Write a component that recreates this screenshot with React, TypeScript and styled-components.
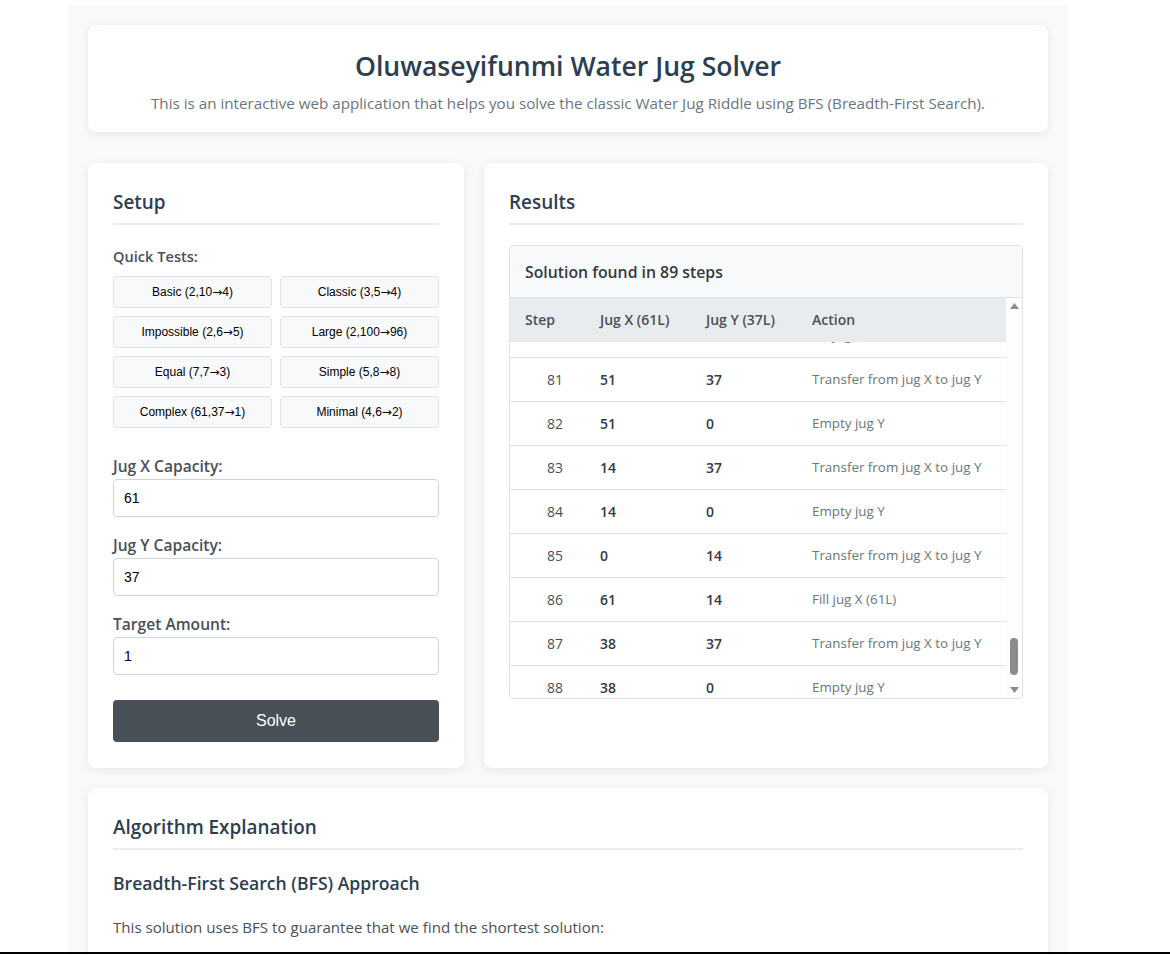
import React, { useLayoutEffect, useRef, useState } from "react";
import styled, { createGlobalStyle } from "styled-components";

const UI_FONT = `"Segoe UI", "Open Sans", "Noto Sans", sans-serif`;
const ARIAL = `"Liberation Sans", Arial, sans-serif`;

const GlobalStyle = createGlobalStyle`
  html, body {
    margin: 0;
    padding: 0;
    background: #ffffff;
    height: 955px;
    overflow: hidden;
  }
  body {
    font-family: ${UI_FONT};
    color: #333;
  }
  * { box-sizing: border-box; }
`;

const Page = styled.main`
  width: 1000px;
  margin: 5px 0 0 68px;
  padding: 20px;
  background: #f8f9fa;
  display: flex;
  flex-direction: column;
`;

const Card = styled.section`
  background: #ffffff;
  border-radius: 8px;
  box-shadow: 0 2px 10px rgba(0, 0, 0, 0.08);
  padding: 25px;
`;

const HeaderCard = styled(Card)`
  text-align: center;
  padding: 25px 25px 20px;
  margin-bottom: 31px;
`;

const Title = styled.h1`
  margin: 0 0 12px;
  font-size: 26.6px;
  line-height: 32px;
  font-weight: 600;
  color: #2c3e50;
`;

const Subtitle = styled.p`
  margin: 0;
  font-size: 15.2px;
  line-height: 18px;
  color: #6c757d;
`;

const Columns = styled.div`
  display: grid;
  grid-template-columns: 2fr 3fr;
  gap: 20px;
  margin-bottom: 20px;
`;

const SectionTitle = styled.h2`
  margin: 0 0 20px;
  padding: 3px 0 9px;
  border-bottom: 2px solid #e9ecef;
  font-size: 18.9px;
  line-height: 23px;
  font-weight: 600;
  color: #2c3e50;
`;

const QuickSection = styled.div`
  margin-bottom: 28px;
`;

const FieldLabel = styled.label<{ $size?: number }>`
  display: block;
  font-size: ${(p) => p.$size ?? 15.6}px;
  line-height: 20px;
  font-weight: 600;
  color: #495057;
`;

const QuickLabel = styled(FieldLabel)`
  line-height: 22px;
  margin-bottom: 9px;
`;

const QuickGrid = styled.div`
  display: grid;
  grid-template-columns: 1fr 1fr;
  gap: 8px;
`;

const QuickButton = styled.button`
  height: 32px;
  background: #f8f9fa;
  border: 1px solid #dee2e6;
  border-radius: 4px;
  font-family: ${ARIAL};
  font-size: 12px;
  color: #000;
  cursor: pointer;
  padding: 0;
`;

const ArrowGlyph = styled.span`
  font-family: "DejaVu Sans", ${ARIAL};
  font-size: 12px;
`;

const Form = styled.div`
  display: flex;
  flex-direction: column;
  gap: 18px;
`;

const Field = styled.div`
  display: flex;
  flex-direction: column;
  gap: 3px;
`;

const Input = styled.input`
  height: 38px;
  width: 100%;
  border: 1px solid #ced4da;
  border-radius: 4px;
  padding: 0 10px;
  font-family: ${ARIAL};
  font-size: 14px;
  color: #000;
  background: #fff;
`;

const SolveButton = styled.button`
  margin-top: 7px;
  margin-bottom: 1px;
  height: 42px;
  width: 100%;
  border: none;
  border-radius: 4px;
  background: #495057;
  color: #fff;
  font-family: ${ARIAL};
  font-size: 16px;
  cursor: pointer;
`;

const TableBox = styled.div`
  border: 1px solid #dee2e6;
  border-radius: 4px;
  overflow: hidden;
`;

const Summary = styled.div`
  height: 52px;
  display: flex;
  align-items: center;
  padding: 0 15px;
  background: #f8f9fa;
  border-bottom: 1px solid #dee2e6;
  font-size: 15.8px;
  font-weight: 600;
  color: #343a40;
`;

const ScrollArea = styled.div`
  display: flex;
  height: 400px;
`;

const Scroller = styled.div`
  flex: 1;
  min-width: 0;
  height: 100%;
  overflow: hidden;
  background: #fff;
`;

const ScrollTrack = styled.div`
  width: 16px;
  flex: none;
  display: flex;
  flex-direction: column;
  background: #fdfdfd;
`;

const ArrowButton = styled.div`
  height: 16px;
  flex: none;
  display: flex;
  align-items: center;
  justify-content: center;
`;

const Rail = styled.div`
  flex: 1;
  display: flex;
  flex-direction: column;
  align-items: center;
`;

const Thumb = styled.div`
  width: 8px;
  border-radius: 4px;
  background: #8b8b8b;
  flex: none;
`;

const Table = styled.table`
  width: 100%;
  border-collapse: collapse;
  table-layout: fixed;
  font-size: 14px;
`;

const HeadCell = styled.th<{ $w?: number }>`
  position: sticky;
  top: 0;
  z-index: 1;
  height: 44px;
  padding: 0 15px;
  text-align: left;
  background: #e9ecef;
  font-weight: 600;
  color: #495057;
  ${(p) => (p.$w ? `width: ${p.$w}px;` : "")}
`;

const Row = styled.tr`
  border-top: 1px solid #dee2e6;
`;

const Cell = styled.td<{ $kind: "step" | "value" | "action" }>`
  height: 44px;
  padding: ${(p) => (p.$kind === "step" ? "0 15px 0 37px" : "0 15px")};
  white-space: nowrap;
  font-size: ${(p) => (p.$kind === "action" ? "13.4px" : "14px")};
  font-weight: ${(p) => (p.$kind === "action" ? 400 : p.$kind === "step" ? 500 : 600)};
  color: ${(p) => (p.$kind === "action" ? "#6c757d" : p.$kind === "step" ? "#495057" : "#343a40")};
`;

const SubTitle = styled.h3`
  margin: 23px 0 21px;
  font-size: 17.6px;
  line-height: 21px;
  font-weight: 600;
  color: #2c3e50;
`;

const Paragraph = styled.p`
  margin: 0 0 18px;
  font-size: 15.1px;
  line-height: 24px;
  color: #495057;
`;

const List = styled.ul`
  margin: 0;
  padding-left: 24px;
  font-size: 15.1px;
  line-height: 26px;
  color: #495057;
`;

const ScreenEdge = styled.div`
  position: fixed;
  left: 0;
  right: 0;
  bottom: 1px;
  height: 2px;
  background: #000;
`;

type StepRow = { step: number; x: number; y: number; action: string };

function solve(cx: number, cy: number, target: number): StepRow[] {
  const rows: StepRow[] = [{ step: 1, x: 0, y: 0, action: "Initial state" }];
  let x = 0;
  let y = 0;
  let n = 1;
  while (x !== target && y !== target && n < 500) {
    n++;
    let action: string;
    if (x === 0) {
      x = cx;
      action = `Fill jug X (${cx}L)`;
    } else if (y === cy) {
      y = 0;
      action = "Empty jug Y";
    } else {
      const t = Math.min(x, cy - y);
      x -= t;
      y += t;
      action = "Transfer from jug X to jug Y";
    }
    rows.push({ step: n, x, y, action });
  }
  return rows;
}

const quickTests: [string, string][] = [
  ["Basic (2,10", "4)"],
  ["Classic (3,5", "4)"],
  ["Impossible (2,6", "5)"],
  ["Large (2,100", "96)"],
  ["Equal (7,7", "3)"],
  ["Simple (5,8", "8)"],
  ["Complex (61,37", "1)"],
  ["Minimal (4,6", "2)"],
];

const UpArrow = () => (
  <svg width="9" height="6" viewBox="0 0 9 6">
    <polygon points="4.5,0 9,6 0,6" fill="#8b8b8b" />
  </svg>
);

const DownArrow = () => (
  <svg width="9" height="6" viewBox="0 0 9 6">
    <polygon points="0,0 9,0 4.5,6" fill="#8b8b8b" />
  </svg>
);

export default function App() {
  const rows = solve(61, 37, 1);
  const scrollRef = useRef<HTMLDivElement>(null);
  const anchorRef = useRef<HTMLTableRowElement>(null);
  const [thumb, setThumb] = useState({ top: 324, height: 37 });

  useLayoutEffect(() => {
    const box = scrollRef.current;
    const anchor = anchorRef.current;
    if (!box || !anchor) return;
    const offset =
      anchor.getBoundingClientRect().top - box.getBoundingClientRect().top + box.scrollTop;
    box.scrollTop = offset - 59;
    const rail = box.clientHeight - 32;
    const ratio = box.clientHeight / box.scrollHeight;
    const h = Math.max(20, rail * ratio);
    const maxScroll = box.scrollHeight - box.clientHeight;
    const pos = maxScroll > 0 ? box.scrollTop / maxScroll : 0;
    setThumb({ top: pos * (rail - h) - 2, height: h });
  }, []);

  return (
    <>
      <GlobalStyle />
      <Page>
        <HeaderCard>
          <Title>Oluwaseyifunmi Water Jug Solver</Title>
          <Subtitle>
            This is an interactive web application that helps you solve the classic Water Jug
            Riddle using BFS (Breadth-First Search).
          </Subtitle>
        </HeaderCard>

        <Columns>
          <Card>
            <SectionTitle>Setup</SectionTitle>
            <QuickSection>
              <QuickLabel $size={14.6}>Quick Tests:</QuickLabel>
              <QuickGrid>
                {quickTests.map(([a, b]) => (
                  <QuickButton key={a}>
                    {a}
                    <ArrowGlyph>→</ArrowGlyph>
                    {b}
                  </QuickButton>
                ))}
              </QuickGrid>
            </QuickSection>
            <Form>
              <Field>
                <FieldLabel>Jug X Capacity:</FieldLabel>
                <Input type="text" defaultValue="61" />
              </Field>
              <Field>
                <FieldLabel>Jug Y Capacity:</FieldLabel>
                <Input type="text" defaultValue="37" />
              </Field>
              <Field>
                <FieldLabel>Target Amount:</FieldLabel>
                <Input type="text" defaultValue="1" />
              </Field>
              <SolveButton>Solve</SolveButton>
            </Form>
          </Card>

          <Card>
            <SectionTitle>Results</SectionTitle>
            <TableBox>
              <Summary>Solution found in {rows.length} steps</Summary>
              <ScrollArea>
                <Scroller ref={scrollRef}>
                  <Table>
                    <thead>
                      <tr>
                        <HeadCell $w={75}>Step</HeadCell>
                        <HeadCell $w={106}>Jug X (61L)</HeadCell>
                        <HeadCell $w={106}>Jug Y (37L)</HeadCell>
                        <HeadCell>Action</HeadCell>
                      </tr>
                    </thead>
                    <tbody>
                      {rows.map((r) => (
                        <Row key={r.step} ref={r.step === 81 ? anchorRef : undefined}>
                          <Cell $kind="step">{r.step}</Cell>
                          <Cell $kind="value">{r.x}</Cell>
                          <Cell $kind="value">{r.y}</Cell>
                          <Cell $kind="action">{r.action}</Cell>
                        </Row>
                      ))}
                    </tbody>
                  </Table>
                </Scroller>
                <ScrollTrack>
                  <ArrowButton>
                    <UpArrow />
                  </ArrowButton>
                  <Rail>
                    <Thumb style={{ marginTop: thumb.top, height: thumb.height }} />
                  </Rail>
                  <ArrowButton>
                    <DownArrow />
                  </ArrowButton>
                </ScrollTrack>
              </ScrollArea>
            </TableBox>
          </Card>
        </Columns>

        <Card>
          <SectionTitle>Algorithm Explanation</SectionTitle>
          <SubTitle>Breadth-First Search (BFS) Approach</SubTitle>
          <Paragraph>This solution uses BFS to guarantee that we find the shortest solution:</Paragraph>
          <List>
            <li>Each state is a pair (x, y) of water amounts in the two jugs.</li>
            <li>From every state we try all six possible operations.</li>
            <li>The first time the target amount appears, the path is the shortest one.</li>
          </List>
        </Card>
      </Page>
      <ScreenEdge />
    </>
  );
}
